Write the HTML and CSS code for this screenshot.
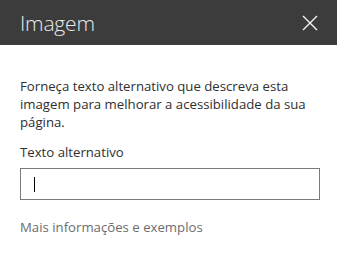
FILE: index.html
```html
<!DOCTYPE html>
<html lang="pt">
<head>
    <meta charset="UTF-8">
    <title>Imagem</title>
    <link rel="stylesheet" href="styles.css">
</head>
<body>
    <div class="panel">
        <div class="panel-header">
            <h1 class="panel-title">Imagem</h1>
            <button class="close-btn" title="Fechar">
                <svg width="16" height="16" viewBox="0 0 16 16">
                    <path d="M1 1 L15 15 M15 1 L1 15" stroke="#f4f4f4" stroke-width="1.4" fill="none"/>
                </svg>
            </button>
        </div>

        <!-- conteúdo -->
        <div class="panel-body">
            <p class="desc">Forneça texto alternativo que descreva esta imagem para melhorar a acessibilidade da sua página.</p>
            <label class="field-label" for="altText">Texto alternativo</label>
            <div class="text-field">
                <span class="caret"></span>
                <input id="altText" type="text">
            </div>
            <a class="more-link" href="#">Mais informações e exemplos</a>
        </div>
    </div>
</body>
</html>
```

FILE: styles.css
```css
body {
    margin: 0;
    background: #fff;
    font-family: "Open Sans", "Noto Sans", sans-serif;
    color: #333;
}

.panel-header {
    height: 45px;
    background: #3c3c3c;
    display: flex;
    align-items: center;
    justify-content: space-between;
    padding: 0 19px 0 20px;
}

.panel-title {
    margin: 0;
    font-size: 21px;
    font-weight: 300;
    color: #eaeaea;
    letter-spacing: -0.2px;
}

.close-btn {
    background: none;
    border: none;
    padding: 0;
    width: 16px;
    height: 16px;
    cursor: pointer;
    display: flex;
}

.panel-body {
    padding: 32px 17px 0 20px;
}

.desc {
    margin: 0;
    font-size: 13.2px;
    line-height: 18px;
    color: #2f2f2f;
}

.field-label {
    display: block;
    margin-top: 12px;
    font-size: 13.2px;
    line-height: 18px;
    color: #2f2f2f;
}

.text-field {
    position: relative;
    margin-top: 7px;
    height: 32px;
    box-sizing: border-box;
    border: 1px solid #7a7a7a;
}

.text-field input {
    border: none;
    outline: none;
    width: 100%;
    height: 100%;
    box-sizing: border-box;
    padding: 0 12px;
    background: transparent;
}

.caret {
    position: absolute;
    left: 13px;
    top: 8px;
    width: 1px;
    height: 15px;
    background: #000;
}

.more-link {
    display: block;
    margin-top: 18px;
    font-size: 13.2px;
    line-height: 18px;
    color: #6d6d6d;
    text-decoration: none;
}
```
